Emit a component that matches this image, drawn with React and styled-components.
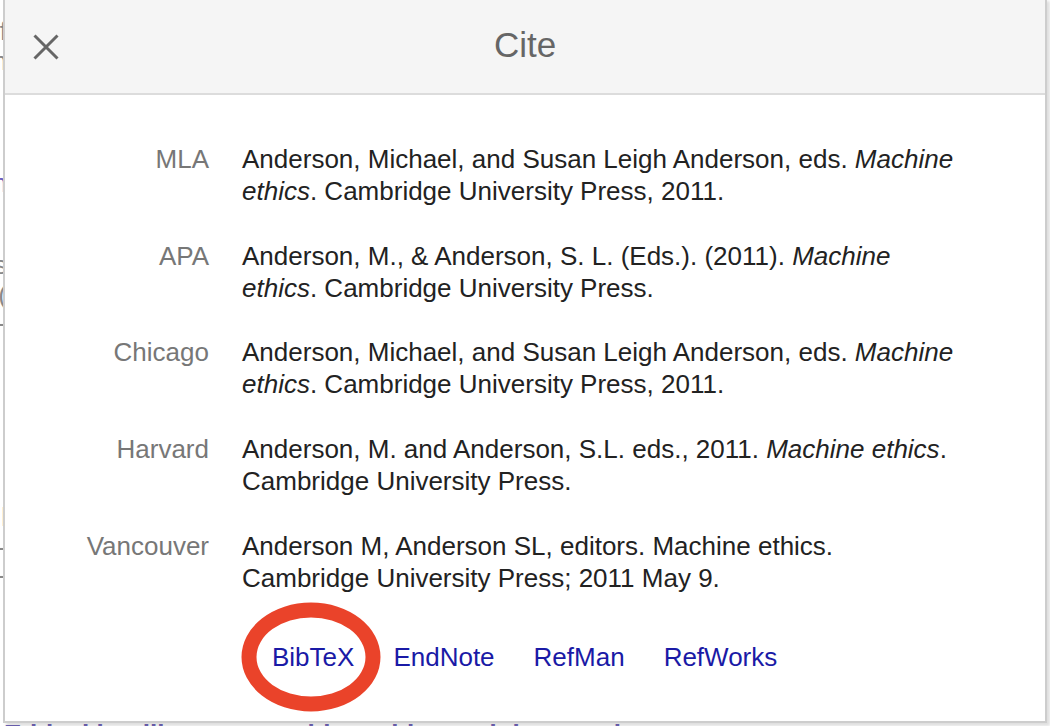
import React from "react";
import styled, { createGlobalStyle } from "styled-components";

const Global = createGlobalStyle`
  html, body { margin: 0; padding: 0; background: #fff; }
  body { font-family: "Liberation Sans", Arial, sans-serif; overflow: hidden; }
  #root { width: 1050px; height: 726px; position: relative; overflow: hidden; }
`;

const PageBehind = styled.div`
  width: 1050px;
  height: 726px;
  overflow: hidden;
`;

const Strip = styled.div`
  width: 3px;
  height: 718px;
  overflow: hidden;
  display: flex;
  flex-direction: column;
  align-items: flex-end;
`;

const Frag = styled.span`
  display: block;
  font-size: 26px;
  line-height: 26px;
  white-space: nowrap;
  color: ${(p) => (p.$link ? "#6a5fc1" : "#888")};
  margin-top: ${(p) => p.$gap}px;
  margin-right: -4px;
`;

const BehindTitle = styled.div`
  font-size: 26px;
  line-height: 32px;
  font-weight: bold;
  color: #7064b8;
  white-space: nowrap;
  padding-left: 4px;
`;

const Dialog = styled.div`
  position: absolute;
  left: 3px;
  top: -2px;
  width: 1044px;
  height: 725px;
  box-sizing: border-box;
  border: 2px solid #cdcdcd;
  background: #fff;
  box-shadow: 3px 3px 3px rgba(0, 0, 0, 0.13);
  display: flex;
  flex-direction: column;
  z-index: 2;
`;

const Header = styled.div`
  height: 93px;
  background: #f5f5f5;
  border-bottom: 2px solid #dcdcdc;
  display: grid;
  grid-template-columns: 82px 1fr 82px;
  align-items: center;
  flex-shrink: 0;
`;

const CloseButton = styled.button`
  width: 82px;
  height: 93px;
  border: 0;
  padding: 0;
  background: transparent;
  display: flex;
  align-items: center;
  justify-content: center;
  cursor: pointer;
`;

const Title = styled.h1`
  margin: 0;
  padding-bottom: 4px;
  font-size: 35px;
  line-height: 40px;
  font-weight: normal;
  color: #666;
  text-align: center;
`;

const Body = styled.div`
  padding-top: 48px;
`;

const CiteTable = styled.div`
  display: grid;
  grid-template-columns: 204px 715px;
  column-gap: 33px;
  row-gap: 32.7px;
`;

const Label = styled.div`
  text-align: right;
  font-size: 26px;
  line-height: 32px;
  color: #777;
`;

const CiteText = styled.div`
  font-size: 26px;
  line-height: 32px;
  color: #222;
`;

const LinkRow = styled.div`
  margin-top: 47px;
  padding-left: 267px;
  display: flex;
  gap: 39px;
`;

const ExportLink = styled.a`
  position: relative;
  font-size: 26px;
  line-height: 32px;
  color: #1a1aa6;
  text-decoration: none;
  cursor: pointer;
`;

const Circle = styled.span`
  position: absolute;
  left: 50%;
  top: 50%;
  width: 139px;
  height: 109px;
  box-sizing: border-box;
  border: 15px solid #ea432a;
  border-radius: 50%;
  transform: translate(calc(-50% - 2px), -50%);
  pointer-events: none;
`;

const CloseIcon = () => (
  <svg width="26" height="26" viewBox="0 0 26 26">
    <path d="M1.5 1.5 L24.5 24.5 M24.5 1.5 L1.5 24.5" stroke="#666" strokeWidth="3" fill="none" />
  </svg>
);

const citations = [
  {
    label: "MLA",
    text: (
      <>
        Anderson, Michael, and Susan Leigh Anderson, eds. <i>Machine ethics</i>. Cambridge University Press, 2011.
      </>
    ),
  },
  {
    label: "APA",
    text: (
      <>
        Anderson, M., &amp; Anderson, S. L. (Eds.). (2011). <i>Machine ethics</i>. Cambridge University Press.
      </>
    ),
  },
  {
    label: "Chicago",
    text: (
      <>
        Anderson, Michael, and Susan Leigh Anderson, eds. <i>Machine ethics</i>. Cambridge University Press, 2011.
      </>
    ),
  },
  {
    label: "Harvard",
    text: (
      <>
        Anderson, M. and Anderson, S.L. eds., 2011. <i>Machine ethics</i>. Cambridge University Press.
      </>
    ),
  },
  {
    label: "Vancouver",
    text: <>Anderson M, Anderson SL, editors. Machine ethics. Cambridge University Press; 2011 May 9.</>,
  },
];

const fragments = [
  { t: "of", gap: 18 },
  { t: "on", gap: 4 },
  { t: "an", gap: 96, link: true },
  { t: "es", gap: 56 },
  { t: " (", gap: 4 },
  { t: "a-", gap: 2 },
  { t: "Il", gap: 168 },
  { t: "t-", gap: 4 },
  { t: "s-", gap: 2 },
];

export default function App() {
  return (
    <>
      <Global />
      <PageBehind>
        <Strip>
          {fragments.map((f, i) => (
            <Frag key={i} $gap={f.gap} $link={f.link}>
              {f.t}
            </Frag>
          ))}
        </Strip>
        <BehindTitle>Ethical intelligence: machine ethics and the moral</BehindTitle>
      </PageBehind>
      <Dialog>
        <Header>
          <CloseButton aria-label="Close">
            <CloseIcon />
          </CloseButton>
          <Title>Cite</Title>
          <div />
        </Header>
        <Body>
          <CiteTable>
            {citations.map((c) => (
              <React.Fragment key={c.label}>
                <Label>{c.label}</Label>
                <CiteText>{c.text}</CiteText>
              </React.Fragment>
            ))}
          </CiteTable>
          <LinkRow>
            <ExportLink>
              BibTeX
              <Circle />
            </ExportLink>
            <ExportLink>EndNote</ExportLink>
            <ExportLink>RefMan</ExportLink>
            <ExportLink>RefWorks</ExportLink>
          </LinkRow>
        </Body>
      </Dialog>
    </>
  );
}
